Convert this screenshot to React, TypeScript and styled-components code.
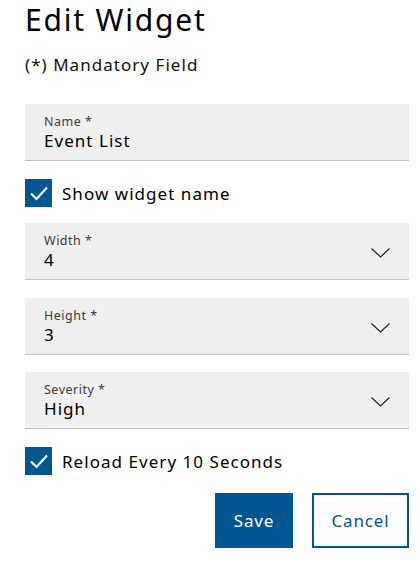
import React from "react";
import styled, { createGlobalStyle } from "styled-components";

const Global = createGlobalStyle`
  html, body { margin: 0; padding: 0; background: #fff; }
  body { font-family: "Noto Sans", "Open Sans", sans-serif; color: #000; letter-spacing: 0.065em; }
  * { box-sizing: border-box; }
`;

const Page = styled.div`
  width: 420px;
  padding: 0 11px 0 25px;
  display: flex;
  flex-direction: column;
`;

const Title = styled.h1`
  margin: 0;
  font-size: 30px;
  font-weight: 400;
  line-height: 40px;
  height: 38px;
  letter-spacing: 0.06em;
`;

const Subtitle = styled.p`
  margin: 15px 0 0 0;
  font-size: 17px;
  line-height: 24px;
  color: #111;
`;

const Form = styled.div`
  margin-top: 27px;
  display: flex;
  flex-direction: column;
`;

const Field = styled.div<{ $gap: number }>`
  margin-top: ${(p) => p.$gap}px;
  height: 57px;
  background: #efefef;
  border-bottom: 1px solid #c4c4c4;
  padding: 10px 19px 0 19px;
  display: flex;
  align-items: center;
`;

const FieldText = styled.div`
  flex: 1;
  display: flex;
  flex-direction: column;
  align-self: flex-start;
`;

const Label = styled.span`
  font-size: 12.5px;
  line-height: 15px;
  color: #3c3c3c;
  letter-spacing: 0.04em;
`;

const Value = styled.span`
  font-size: 17px;
  line-height: 24px;
  color: #000;
`;

const Chevron = styled.svg`
  width: 19px;
  height: 10px;
  margin-top: -6px;
`;

const CheckRow = styled.label<{ $gap: number }>`
  margin-top: ${(p) => p.$gap}px;
  display: flex;
  align-items: center;
  gap: 10px;
  height: 28px;
  font-size: 17px;
`;

const Box = styled.span`
  width: 27px;
  height: 28px;
  background: #005691;
  display: flex;
  align-items: center;
  justify-content: center;
`;

const Buttons = styled.div`
  margin-top: 18px;
  display: flex;
  justify-content: flex-end;
  gap: 19px;
`;

const Button = styled.button<{ $primary?: boolean }>`
  height: 55px;
  padding: 0 10px;
  font-family: inherit;
  font-size: 17px;
  letter-spacing: 0.05em;
  border: 2px solid #005691;
  background: ${(p) => (p.$primary ? "#005691" : "#fff")};
  color: ${(p) => (p.$primary ? "#fff" : "#005691")};
  width: ${(p) => (p.$primary ? 78 : 97)}px;
`;

const Check = () => (
  <Box>
    <svg width="20" height="16" viewBox="0 0 20 16">
      <path d="M2 8.5 L7.5 14 L18 2.5" fill="none" stroke="#fff" strokeWidth="2.2" />
    </svg>
  </Box>
);

const Select = ({ label, value, gap }: { label: string; value: string; gap: number }) => (
  <Field $gap={gap}>
    <FieldText>
      <Label>{label}</Label>
      <Value>{value}</Value>
    </FieldText>
    <Chevron viewBox="0 0 19 10">
      <path d="M0.5 0.5 L9.5 9 L18.5 0.5" fill="none" stroke="#222" strokeWidth="1.2" />
    </Chevron>
  </Field>
);

export default function App() {
  return (
    <>
      <Global />
      <Page>
        <Title>Edit Widget</Title>
        <Subtitle>(*) Mandatory Field</Subtitle>
        <Form>
          <Field $gap={0}>
            <FieldText>
              <Label>Name *</Label>
              <Value>Event List</Value>
            </FieldText>
          </Field>
          <CheckRow $gap={18}>
            <Check />
            Show widget name
          </CheckRow>
          <Select gap={16} label="Width *" value="4" />
          <Select gap={18} label="Height *" value="3" />
          <Select gap={17} label="Severity *" value="High" />
          <CheckRow $gap={18}>
            <Check />
            Reload Every 10 Seconds
          </CheckRow>
          <Buttons>
            <Button $primary>Save</Button>
            <Button>Cancel</Button>
          </Buttons>
        </Form>
      </Page>
    </>
  );
}
